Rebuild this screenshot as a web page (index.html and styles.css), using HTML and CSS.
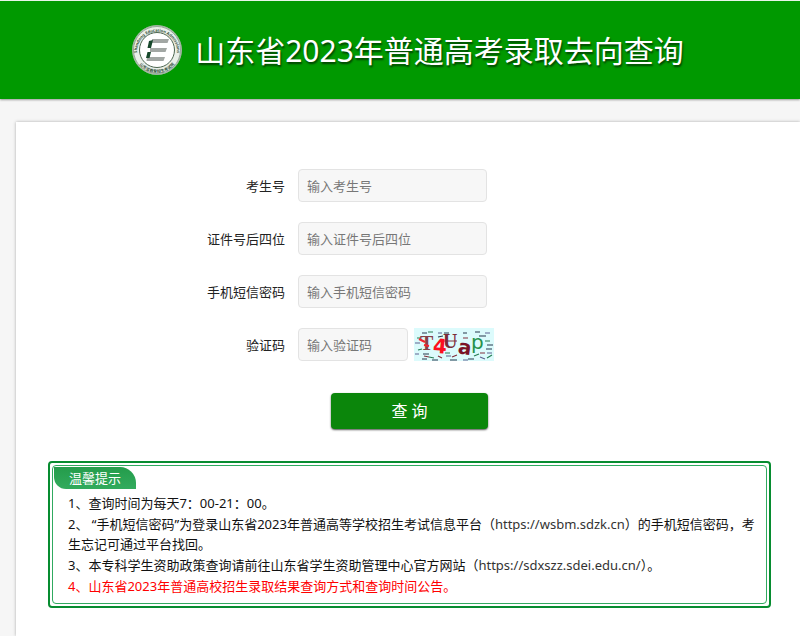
FILE: index.html
```html
<!DOCTYPE html>
<html lang="zh-CN">
<head>
<meta charset="utf-8">
<meta name="viewport" content="width=device-width, initial-scale=1">
<title>山东省2023年普通高考录取去向查询</title>
<link rel="stylesheet" href="styles.css">
</head>
<body>
<header class="site-header">
  <svg class="logo" viewBox="0 0 50 50" aria-hidden="true">
    <defs>
      <path id="arc-top" d="M6 33 A20 20 0 1 1 44 33"/>
      <path id="arc-bottom" d="M3 30 A22.500 22.500 0 0 0 47 30"/>
    </defs>
    <circle cx="25" cy="25" r="24.500" fill="#e9efe9" stroke="#9db39e"/>
    <circle cx="25" cy="25" r="23.500" fill="none" stroke="#5d755f" stroke-width=".6"/>
    <circle cx="25" cy="25" r="17.500" fill="#fff" stroke="#4d6650" stroke-width="1"/>
    <text class="logo-text"><textPath href="#arc-top" startOffset="50%" text-anchor="middle">Shandong Education Admissions</textPath></text>
    <text class="logo-text logo-text-cn"><textPath href="#arc-bottom" startOffset="50%" text-anchor="middle">山东省教育招生考试院</textPath></text>
    <path d="M20 14h17l-1.500 4h-15.500zM18 23h17l-1.500 4h-15.500zM15 32h18l-1.500 4h-17z" fill="#a2a7a4"/>
    <path d="M17 16l4-1-2 8h-3.500zM15.500 27h3.500l-1.500 6h-3.500z" fill="#17482b"/>
  </svg>
  <h1 class="title">山东省2023年普通高考录取去向查询</h1>
</header>
<main class="panel">
  <form class="query">
    <label for="exam">考生号</label>
    <div class="field"><input id="exam" type="text" placeholder="输入考生号"></div>
    <label for="idno">证件号后四位</label>
    <div class="field"><input id="idno" type="text" placeholder="输入证件号后四位"></div>
    <label for="sms">手机短信密码</label>
    <div class="field"><input id="sms" type="password" placeholder="输入手机短信密码"></div>
    <label for="code">验证码</label>
    <div class="field">
      <input id="code" class="short" type="text" placeholder="输入验证码">
      <svg class="captcha" viewBox="0 0 80 33" role="img" aria-label="验证码">
        <rect width="80" height="33" fill="#dcfbfc"/>
        <g stroke-width="1.200" fill="none">
          <path stroke="#26384d" d="M8 5h5M30 5h5M49 5h4M61 4h5M65 8h7M73 17h6M72 21h6M9 26h6M8 31h5M18 32h6M36 32h7M54 31h6M24 9l5-1"/>
          <path stroke="#267d53" d="M14 4h5M3 10h4M60 28l5-2M73 30l5-3M15 29l5 1M71 13h5M4 22l4-1M31 25h5"/>
          <path stroke="#81303c" d="M24 28l4 2M38 29l5-2M66 25h5M49 10h5M10 28l5 1M30 13h13"/>
          <path stroke="#5d628f" d="M1 26h4M32 28h5M49 32h5M66 29l5 2M71 5h5M24 5h4M1 15h5M73 25h5"/>
        </g>
        <g class="captcha-text">
          <text class="captcha-serif" x="6" y="22" fill="#864047">T</text>
          <text x="19" y="25" fill="#fc1020" transform="rotate(5 23 18)">4</text>
          <text class="captcha-serif" x="29" y="20" fill="#792d38">U</text>
          <text x="44" y="26" fill="#7b1427" transform="rotate(8 49 20)">a</text>
          <text class="captcha-light" x="57" y="21" fill="#26924b">p</text>
        </g>
        <path d="M5 11l6 3M10 17l5 1" stroke="#f3252e" stroke-width="2"/>
      </svg>
    </div>
    <button class="submit" type="button">查 询</button>
  </form>
  <section class="notice">
    <div class="notice-inner">
      <h2 class="notice-title">温馨提示</h2>
      <ul class="notice-list">
        <li>1、查询时间为每天7：00-21：00。</li>
        <li>2、 “手机短信密码”为登录山东省2023年普通高等学校招生考试信息平台（<a href="https://wsbm.sdzk.cn">https://wsbm.sdzk.cn</a>）的手机短信密码，考生忘记可通过平台找回。</li>
        <li>3、本专科学生资助政策查询请前往山东省学生资助管理中心官方网站（<a href="https://sdxszz.sdei.edu.cn/">https://sdxszz.sdei.edu.cn/</a>）。</li>
        <li class="alert">4、山东省2023年普通高校招生录取结果查询方式和查询时间公告。</li>
      </ul>
    </div>
  </section>
</main>
</body>
</html>
```
FILE: styles.css
```css
* {
  box-sizing: border-box;
}

body {
  margin: 0;
  min-height: 100vh;
  display: flex;
  flex-direction: column;
  background: #f6f6f6;
  color: #222;
  font: 13px/20px "Noto Sans", "Noto Sans CJK SC", sans-serif;
}

.site-header {
  display: flex;
  align-items: center;
  justify-content: center;
  gap: 13px;
  padding: 24px 0 24px 2%;
  border-top: 1px solid #e8f5e8;
  background: #090;
  box-shadow: 0 1px 2px #999;
}

.logo {
  width: 50px;
  height: 50px;
}

.logo-text {
  font-size: 4px;
  font-weight: 700;
  fill: #35523b;
}

.title {
  margin: 0;
  color: #fff;
  font-size: 30px;
  font-weight: 400;
  line-height: 49px;
  text-shadow: 1px 2px 2px #024002;
}

.panel {
  flex: 1;
  margin: 23px 0 0 16px;
  padding: 47px 29px 28px 32px;
  background: #fff;
  box-shadow: 0 0 3px #aaa;
}

.query {
  display: grid;
  grid-template-columns: 237px 1fr;
  gap: 20px 13px;
  align-items: center;
}

.query label {
  text-align: right;
}

.field {
  display: flex;
  gap: 6px;
}

.field input {
  width: 189px;
  height: 33px;
  padding: 0 8px;
  border: 1px solid #e3e3e3;
  border-radius: 4px;
  background: #f7f7f7;
  color: #333;
  font: inherit;
}

.field .short {
  width: 110px;
}

.field input::placeholder {
  color: #777;
}

.captcha {
  width: 80px;
  height: 33px;
}

.captcha-text {
  font-family: "DejaVu Sans", sans-serif;
  font-size: 20px;
  font-weight: 700;
}

.captcha-serif {
  font-family: "Liberation Serif", serif;
}

.captcha-light {
  font-weight: 400;
}

.submit {
  grid-column: 2;
  width: 157px;
  height: 36px;
  margin: 12px 0 0 33px;
  padding: 0;
  border: 0;
  border-radius: 4px;
  background: #0b860b;
  box-shadow: 0 1px 2px #555;
  color: #fff;
  font: inherit;
  font-size: 16px;
}

.notice {
  margin-top: 32px;
  padding: 2px;
  border: 2px solid #078c30;
  border-radius: 4px;
}

.notice-inner {
  padding: 1px 1px 7px;
  border: 1px solid #30aa60;
  border-radius: 4px;
}

.notice-title {
  width: 82px;
  margin: 0;
  border-radius: 0 16px 0 12px;
  background: linear-gradient(#249c4b, #32ab5d);
  color: #fff;
  font-size: 13px;
  font-weight: 400;
  line-height: 22px;
  text-align: center;
}

.notice-list {
  display: grid;
  gap: 1px;
  margin: 4px 0 0;
  padding: 0 0 0 14px;
  color: #111;
  list-style: none;
}

.notice a {
  color: #333;
  text-decoration: none;
}

.notice .alert {
  color: #f00;
}
```
